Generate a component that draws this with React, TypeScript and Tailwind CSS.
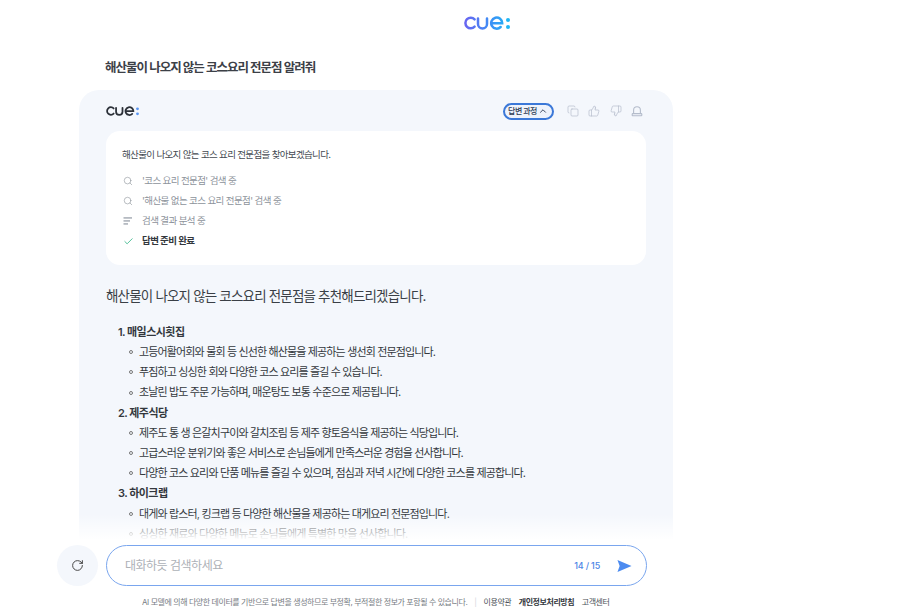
import React from "react";
import { Copy, ThumbsUp, ThumbsDown, Search, Check, RotateCw, ChevronUp } from "lucide-react";

const FONT = "font-['Inter','Noto_Sans_CJK_KR',sans-serif]";

const sections = [
  {
    title: "1. 매일스시횟집",
    items: [
      "고등어활어회와 물회 등 신선한 해산물을 제공하는 생선회 전문점입니다.",
      "푸짐하고 싱싱한 회와 다양한 코스 요리를 즐길 수 있습니다.",
      "초날린 밥도 주문 가능하며, 매운탕도 보통 수준으로 제공됩니다.",
    ],
  },
  {
    title: "2. 제주식당",
    items: [
      "제주도 통 생 은갈치구이와 갈치조림 등 제주 향토음식을 제공하는 식당입니다.",
      "고급스러운 분위기와 좋은 서비스로 손님들에게 만족스러운 경험을 선사합니다.",
      "다양한 코스 요리와 단품 메뉴를 즐길 수 있으며, 점심과 저녁 시간에 다양한 코스를 제공합니다.",
    ],
  },
  {
    title: "3. 하이크랩",
    items: [
      "대게와 랍스터, 킹크랩 등 다양한 해산물을 제공하는 대게요리 전문점입니다.",
      "싱싱한 재료와 다양한 메뉴로 손님들에게 특별한 맛을 선사합니다.",
    ],
  },
];

function CueLogo({ className, id, plain }: { className: string; id: string; plain?: boolean }) {
  const stroke = plain ? "#2b3038" : `url(#${id})`;
  return (
    <svg viewBox="0 0 46 14" className={className} fill="none">
      <defs>
        <linearGradient id={id} x1="0" y1="0" x2="46" y2="0" gradientUnits="userSpaceOnUse">
          <stop offset="0" stopColor="#6a63f0" />
          <stop offset="0.55" stopColor="#3f8df5" />
          <stop offset="1" stopColor="#1fb6f5" />
        </linearGradient>
      </defs>
      <path d="M10.6 3.4A5.3 5.3 0 1 0 10.6 10.6" stroke={stroke} strokeWidth="2.5" strokeLinecap="round" />
      <path d="M14 2.5V8A4.4 4.4 0 0 0 23 8V2.5" stroke={stroke} strokeWidth="2.5" strokeLinecap="round" />
      <path d="M27.2 7.2H38.2A5.5 5.5 0 1 0 36.6 11" stroke={stroke} strokeWidth="2.5" strokeLinecap="round" />
      <circle cx="44" cy="4" r="2" fill={plain ? "#5a96f2" : "#1fb6f5"} />
      <circle cx="44" cy="11" r="2" fill={plain ? "#5a96f2" : "#1fb6f5"} />
    </svg>
  );
}

export default function App() {
  return (
    <div className={`${FONT} relative h-[612px] w-[904px] overflow-hidden bg-white`}>
      <div className="flex h-[45px] items-center justify-center pl-[70px]">
        <CueLogo id="cue-main" className="h-[14px] w-[46px]" />
      </div>

      <div className="pl-[105px] pt-[14px] text-[12.5px] font-semibold leading-[18px] tracking-[-1px] text-[#3c4047]">
        해산물이 나오지 않는 코스요리 전문점 알려줘
      </div>

      <div className="ml-[79px] mt-[13px] h-[600px] w-[594px] rounded-t-[20px] bg-[#f4f7fc] px-[27px] pt-[13px]">
        <div className="flex h-[16px] items-center justify-between">
          <CueLogo id="cue-small" plain className="h-[10px] w-[33px]" />
          <div className="flex items-center">
            <div className="flex h-[17px] w-[51px] items-center justify-center gap-[1px] rounded-full border-2 border-[#3b78d8] bg-[#eef3fc] text-[8px] font-medium tracking-[-0.55px] text-[#2f3b52]">
              답변 과정
              <ChevronUp size={10} strokeWidth={2.2} />
            </div>
            <div className="ml-[13px] flex items-center gap-[9.5px] pr-[3px] text-[#b4bccb]">
              <Copy size={12} strokeWidth={1.4} />
              <ThumbsUp size={12} strokeWidth={1.4} />
              <ThumbsDown size={12} strokeWidth={1.4} />
              <svg viewBox="0 0 12 12" className="h-[12px] w-[12px]" fill="none" stroke="currentColor" strokeWidth="1.1">
                <path d="M2.6 8.6V5.2A3.4 3.4 0 0 1 9.4 5.2V8.6" />
                <rect x="1.2" y="8.6" width="9.6" height="2.2" rx="0.6" />
              </svg>
            </div>
          </div>
        </div>

        <div className="mt-[12px] h-[134px] w-[540px] rounded-[14px] bg-white px-[16px] pt-[17px]">
          <div className="text-[9.5px] leading-[14px] tracking-[-0.65px] text-[#444a52]">
            해산물이 나오지 않는 코스 요리 전문점을 찾아보겠습니다.
          </div>
          <div className="mt-[11.5px] flex flex-col gap-[6.3px] text-[9.5px] leading-[14px] tracking-[-0.6px] text-[#8d939b]">
            <div className="flex items-center">
              <span className="w-[20px] pl-[1px]">
                <Search size={10} strokeWidth={1.4} className="text-[#8a9098]" />
              </span>
              <span>'코스 요리 전문점' 검색 중</span>
            </div>
            <div className="flex items-center">
              <span className="w-[20px] pl-[1px]">
                <Search size={10} strokeWidth={1.4} className="text-[#8a9098]" />
              </span>
              <span>'해산물 없는 코스 요리 전문점' 검색 중</span>
            </div>
            <div className="flex items-center">
              <span className="w-[20px] pl-[1px]">
                <svg viewBox="0 0 10 10" className="h-[10px] w-[10px]" fill="#b6bbc2">
                  <rect x="0.5" y="1" width="8.5" height="1.8" />
                  <rect x="0.5" y="4" width="6.5" height="1.8" />
                  <rect x="0.5" y="7" width="4.5" height="1.8" />
                </svg>
              </span>
              <span>검색 결과 분석 중</span>
            </div>
            <div className="flex items-center font-semibold text-[#33373d]">
              <span className="w-[20px] pl-[1px]">
                <Check size={11} strokeWidth={1.8} className="text-[#2fb384]" />
              </span>
              <span>답변 준비 완료</span>
            </div>
          </div>
        </div>

        <div className="mt-[21px] text-[13.5px] leading-[20px] tracking-[-0.82px] text-[#3a3f46]">
          해산물이 나오지 않는 코스요리 전문점을 추천해드리겠습니다.
        </div>

        <div className="mt-[16px] pl-[12px] text-[#33373d]">
          {sections.map((s) => (
            <div key={s.title}>
              <div className="flex h-[20.2px] items-center text-[11px] font-semibold tracking-[-0.55px]">{s.title}</div>
              {s.items.map((t) => (
                <div key={t} className="flex h-[20.2px] items-center text-[11px] tracking-[-0.85px]">
                  <span className="ml-[11px] mr-[6px] h-[4px] w-[4px] rounded-full border-[0.75px] border-[#777]" />
                  {t}
                </div>
              ))}
            </div>
          ))}
        </div>
      </div>

      {/* fade plus the input dock over the answer */}
      <div className="absolute left-0 top-[514px] h-[26px] w-full bg-gradient-to-b from-white/0 to-white" />
      <div className="absolute bottom-0 left-0 h-[72px] w-full bg-white pt-[5px]">
        <div className="flex h-[41px] items-start pl-[57px]">
          <div className="flex h-[41px] w-[41px] items-center justify-center rounded-full bg-[#f4f7fc] text-[#444]">
            <RotateCw size={13} strokeWidth={1.8} />
          </div>
          <div className="ml-[8px] flex h-[41px] w-[541px] items-center rounded-full border border-[#7aa6ee] pl-[18px] pr-[14px]">
            <span className="flex-1 text-[12px] tracking-[-0.5px] text-[#adb1b7]">대화하듯 검색하세요</span>
            <span className="mr-[17px] text-[9px] font-medium tracking-[-0.2px] text-[#4c86e6]">14 / 15</span>
            <svg viewBox="0 0 16 14" className="h-[14px] w-[15px]" fill="#4c8bf0">
              <path d="M0.5 0.5 15.5 7 0.5 13.5 2.8 7Z" />
            </svg>
          </div>
        </div>
        <div className="mt-[10px] flex items-start pl-[142px] text-[8px] leading-[12px] tracking-[-0.43px]">
          <span className="text-[#777c83]">AI 모델에 의해 다양한 데이터를 기반으로 답변을 생성하므로 부정확, 부적절한 정보가 포함될 수 있습니다.</span>
          <span className="mx-[7px] text-[#d5d8dc]">|</span>
          <span className="text-[#4a4f56]">이용약관</span>
          <span className="ml-[7.5px] font-semibold text-[#33373d]">개인정보처리방침</span>
          <span className="ml-[7.5px] text-[#4a4f56]">고객센터</span>
        </div>
      </div>
    </div>
  );
}
